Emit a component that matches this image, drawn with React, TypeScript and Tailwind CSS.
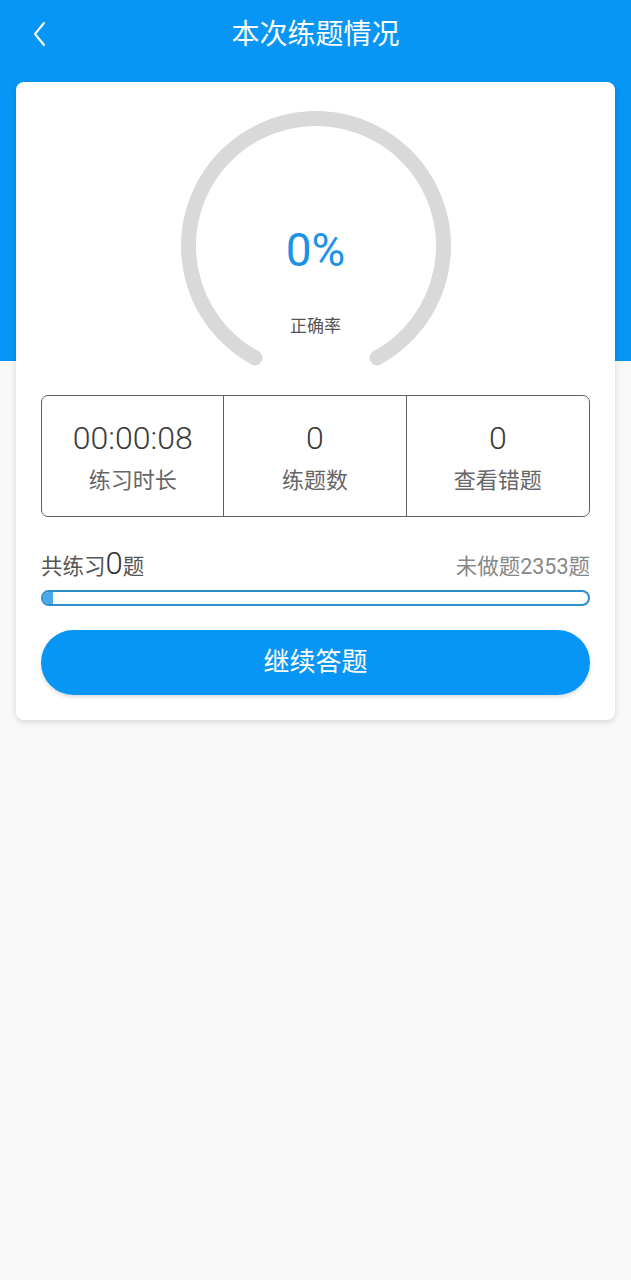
import React from "react";

export default function App() {
  return (
    <div
      className="min-h-[1280px] w-full bg-[linear-gradient(#0796f5_0px,#0796f5_361px,#f9f9f9_361px)] pb-10"
      style={{ fontFamily: 'Roboto, "Noto Sans CJK SC", sans-serif' }}
    >
      {/* Header */}
      <div className="relative flex h-[68px] items-center justify-center">
        <button className="absolute left-[28px] top-[18px] flex h-[32px] w-[24px] items-center justify-center">
          <svg width="16" height="26" viewBox="0 0 16 26" fill="none">
            <path d="M12 2 L3 13 L12 24" stroke="white" strokeWidth="2" strokeLinecap="round" strokeLinejoin="round" />
          </svg>
        </button>
        <h1 className="mt-[2px] text-[28px] font-normal leading-none text-white">本次练题情况</h1>
      </div>

      {/* Card */}
      <div className="mx-[16px] mt-[14px] rounded-[8px] bg-white px-[25px] pb-[25px] pt-[29px] shadow-[0_2px_6px_rgba(0,0,0,0.15)]">
        {/* Gauge */}
        <div className="relative mx-auto h-[256px] w-[270px]">
          <svg className="absolute inset-0" width="270" height="256" viewBox="0 0 270 256" fill="none">
            <path
              d="M 74 246.9 A 127.5 127.5 0 1 1 196 246.9"
              stroke="#d9d9d9"
              strokeWidth="15"
              strokeLinecap="round"
            />
          </svg>
          <div className="relative flex flex-col items-center pt-[115px]">
            <div className="text-[46px] font-normal leading-[48px] text-[#1a93e6]">0%</div>
            <div className="mt-[42px] text-[17px] leading-[20px] text-[#555]">正确率</div>
          </div>
        </div>

        {/* Stats */}
        <div className="mt-[28px] grid h-[122px] grid-cols-3 rounded-[7px] border-[1.5px] border-[#606060]">
          <div className="flex flex-col items-center justify-center border-r-[1.5px] border-[#606060] pt-[2px]">
            <div className="text-[32px] font-light leading-[36px] text-[#3a3a3a]">00:00:08</div>
            <div className="mt-[12px] text-[22px] leading-[26px] text-[#666]">练习时长</div>
          </div>
          <div className="flex flex-col items-center justify-center border-r-[1.5px] border-[#606060] pt-[2px]">
            <div className="text-[32px] font-light leading-[36px] text-[#3a3a3a]">0</div>
            <div className="mt-[12px] text-[22px] leading-[26px] text-[#666]">练题数</div>
          </div>
          <div className="flex flex-col items-center justify-center pt-[2px]">
            <div className="text-[32px] font-light leading-[36px] text-[#3a3a3a]">0</div>
            <div className="mt-[12px] text-[22px] leading-[26px] text-[#666]">查看错题</div>
          </div>
        </div>

        {/* Totals */}
        <div className="mt-[34px] flex items-baseline justify-between">
          <div className="text-[21.5px] leading-[26px] text-[#555]">
            共练习<span className="text-[31px] font-light text-[#333]">0</span>题
          </div>
          <div className="text-[21.5px] leading-[26px] text-[#888]">未做题2353题</div>
        </div>

        {/* Progress */}
        <div className="mt-[10px] h-[16px] w-full overflow-hidden rounded-full border-2 border-[#2a8fcc] bg-white">
          <div className="h-full w-[10px] bg-[#4aa8e8]" />
        </div>

        {/* Button */}
        <button className="mt-[24px] flex h-[65px] w-full items-center justify-center rounded-full bg-[#0796f5] text-[26px] text-white shadow-[0_2px_4px_rgba(0,0,0,0.15)]">
          继续答题
        </button>
      </div>
    </div>
  );
}
